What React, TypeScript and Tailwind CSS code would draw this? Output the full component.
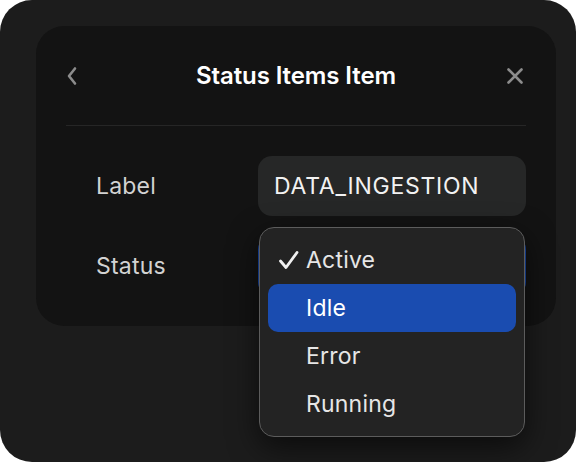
import React from "react";

export default function App() {
  const items = ["Active", "Idle", "Error", "Running"];
  return (
    <div className="w-[576px] h-[462px] bg-white" style={{ fontFamily: "Inter, 'Noto Sans', sans-serif" }}>
      <div className="w-full h-full rounded-[32px] bg-[#1c1c1c] pt-[26px] pl-[36px]">
        <div className="relative w-[520px] h-[300px] rounded-[28px] bg-[#131313] px-[30px] pt-[30px]">
          <div className="flex items-center justify-between h-[40px]">
            <div className="w-[24px] flex justify-start">
              <svg width="14" height="20" viewBox="0 0 14 20" className="ml-[-1px]">
                <path d="M10 2.5 L4 10 L10 17.5" stroke="#8c8c8c" strokeWidth="2.6" fill="none" strokeLinecap="round" strokeLinejoin="round" />
              </svg>
            </div>
            <div className="text-white text-[24px] font-semibold tracking-[-0.1px]">Status Items Item</div>
            <div className="w-[24px] flex justify-end">
              <svg width="18" height="18" viewBox="0 0 18 18" className="mr-[2px]">
                <path d="M2.5 2.5 L15.5 15.5 M15.5 2.5 L2.5 15.5" stroke="#8c8c8c" strokeWidth="2.6" strokeLinecap="round" />
              </svg>
            </div>
          </div>
          <div className="mt-[29px] h-px bg-[#262626]" />
          <div className="pl-[30px] pt-[30px] flex flex-col gap-[20px]">
            <div className="flex items-center h-[60px]">
              <div className="w-[162px] text-[23px] text-[#d2d2d2] tracking-[0.2px]">Label</div>
              <div className="flex-1 h-[60px] rounded-[14px] bg-[#262727] flex items-center px-[16px] text-[23px] text-[#f2f2f2] tracking-[0.75px]">
                DATA_INGESTION
              </div>
            </div>
            <div className="flex items-center h-[60px]">
              <div className="w-[162px] text-[23px] text-[#d2d2d2] tracking-[0.2px]">Status</div>
              <div className="flex-1 h-[60px] rounded-[14px] bg-[#1a4cb0]" />
            </div>
          </div>
          <div className="absolute left-[223px] top-[201px] w-[266px] h-[210px] rounded-[15px] bg-[#232323] border border-[#5c5c5c] shadow-[0_10px_30px_rgba(0,0,0,0.6)] p-[8px]">
            {items.map((it) => (
              <div
                key={it}
                className={`relative h-[48px] rounded-[10px] flex items-center pl-[38px] text-[23px] tracking-[0.2px] ${it === "Idle" ? "bg-[#1a4cb0] text-white" : "text-[#e6e6e6]"}`}
              >
                {it === "Active" && (
                  <svg width="24" height="24" viewBox="0 0 24 24" className="absolute left-[9px] top-[12px]">
                    <path d="M3.5 13 L9 19.5 L20 4.5" stroke="#f0f0f0" strokeWidth="2.8" fill="none" strokeLinecap="round" strokeLinejoin="round" />
                  </svg>
                )}
                {it}
              </div>
            ))}
          </div>
        </div>
      </div>
    </div>
  );
}
